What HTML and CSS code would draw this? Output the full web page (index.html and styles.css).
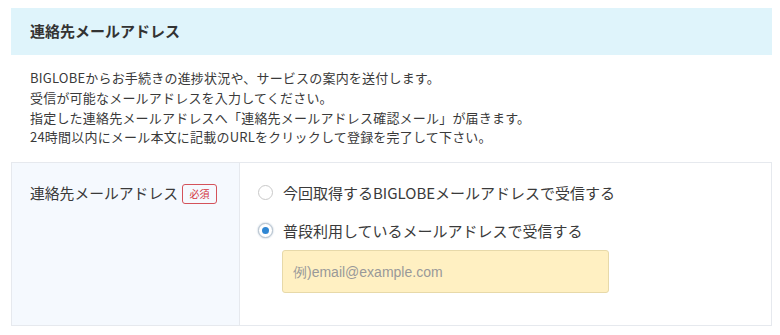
FILE: index.html
```html
<!DOCTYPE html>
<html lang="ja">
<head>
    <meta charset="UTF-8">
    <title>連絡先メールアドレス</title>
    <link rel="stylesheet" href="styles.css">
</head>
<body>
<div class="section">
    <h2 class="section-title">連絡先メールアドレス</h2>
    <p class="lead">
        BIGLOBEからお手続きの進捗状況や、サービスの案内を送付します。<br>
        受信が可能なメールアドレスを入力してください。<br>
        指定した連絡先メールアドレスへ「連絡先メールアドレス確認メール」が届きます。<br>
        24時間以内にメール本文に記載のURLをクリックして登録を完了して下さい。
    </p>
    <div class="form-row">
        <div class="form-label">
            連絡先メールアドレス<span class="required">必須</span>
        </div>
        <div class="form-field">
            <label class="radio">
                <span class="radio-mark"></span>
                今回取得するBIGLOBEメールアドレスで受信する
            </label>
            <label class="radio">
                <span class="radio-mark checked"></span>
                普段利用しているメールアドレスで受信する
            </label>
            <input class="mail-input" type="text" placeholder="例)email@example.com">
        </div>
    </div>
</div>
</body>
</html>
```

FILE: styles.css
```css
body {
    margin: 0;
    padding: 8px 8px 0 11px;
    font-family: "Noto Sans CJK JP", "Noto Sans", sans-serif;
    color: #3a3a3a;
    background: #fff;
}

.section {
    width: 761px;
}

.section-title {
    margin: 0;
    height: 47px;
    padding-left: 19px;
    line-height: 46px;
    font-size: 15px;
    font-weight: bold;
    color: #333;
    background-color: #dff4fb;
}

.lead {
    margin: 13px 0 15px 19px;
    font-size: 13px;
    letter-spacing: 0.2px;
    line-height: 19.8px;
}

.form-row {
    display: flex;
    border: 1px solid #e6e9ee;
    height: 162px;
}

.form-label {
    width: 209px;
    padding: 20px 0 0 18px;
    background-color: #f5f9fe;
    border-right: 1px solid #e6e9ee;
    font-size: 14.8px;
    line-height: 20px;
}

.required {
    display: inline-block;
    margin-left: 4px;
    width: 33px;
    height: 18px;
    line-height: 18px;
    border: 1px solid #d4525a;
    border-radius: 3px;
    color: #d4333d;
    font-size: 10px;
    text-align: center;
    vertical-align: 1px;
}

.form-field {
    padding: 19px 0 0 18px;
}

.radio {
    display: flex;
    align-items: center;
    height: 20px;
    margin-bottom: 18px;
    font-size: 15px;
}

.radio + .radio {
    margin-bottom: 10px;
}

.radio-mark {
    box-sizing: border-box;
    width: 15px;
    height: 15px;
    margin-right: 10px;
    border: 1px solid #c9c9c9;
    border-radius: 50%;
    background: #fff;
    position: relative;
}

.radio-mark.checked {
    border-color: #b8c4cf;
    box-shadow: 0 0 2px #9fb3c6;
}

.radio-mark.checked::after {
    content: "";
    position: absolute;
    left: 3px;
    top: 3px;
    width: 7px;
    height: 7px;
    border-radius: 50%;
    background: #2f86d3;
}

.mail-input {
    box-sizing: border-box;
    display: block;
    margin-left: 24px;
    width: 327px;
    height: 43px;
    padding: 0 10px;
    border: 1px solid #e7d9a9;
    border-radius: 3px;
    background-color: #fff0c2;
    font-family: "Liberation Sans", Arial, sans-serif;
    font-size: 14px;
}

.mail-input::placeholder {
    color: #999;
}
```
